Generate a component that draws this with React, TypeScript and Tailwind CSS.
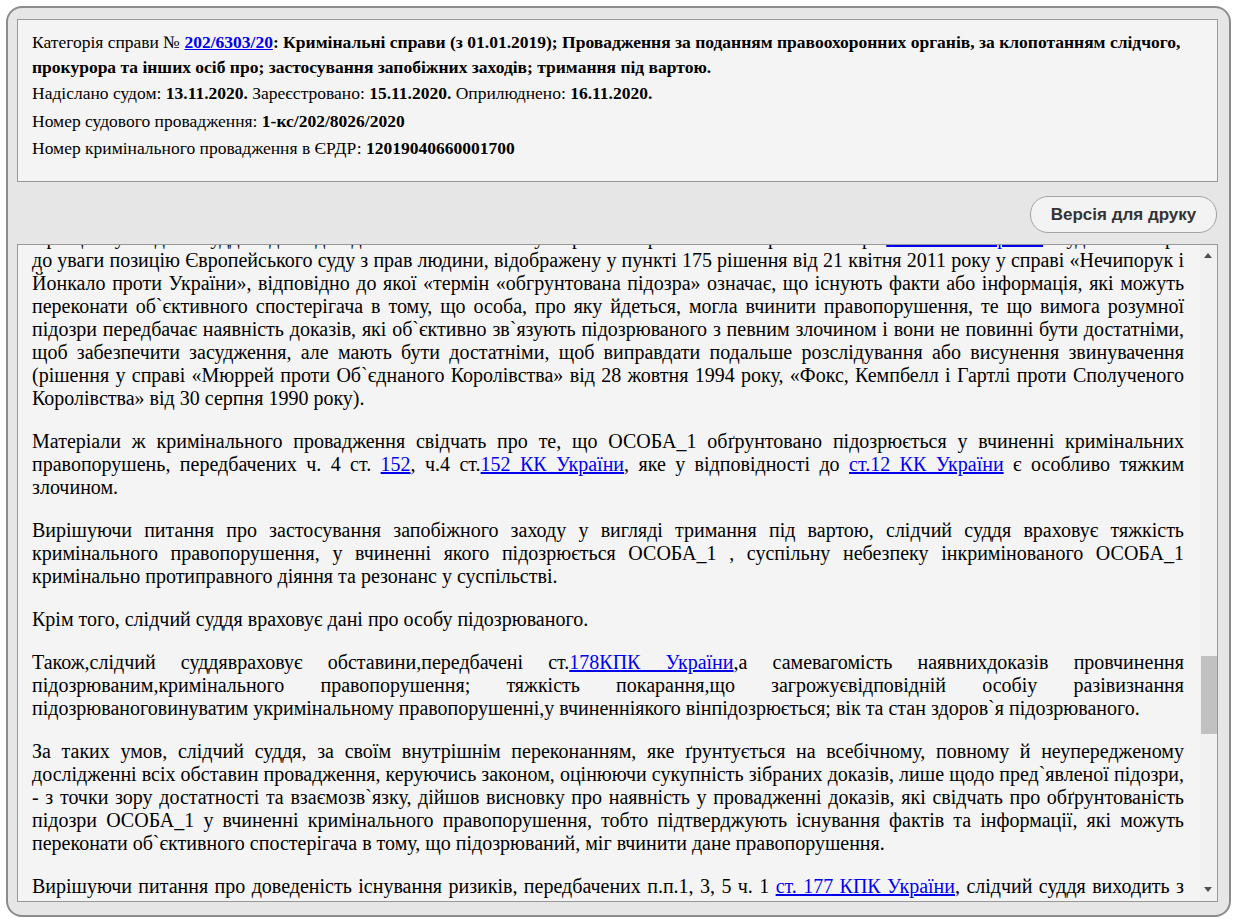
import React from "react";

const A = ({ children }: { children: React.ReactNode }) => (
  <a href="#" className="text-[#0000ee] underline">
    {children}
  </a>
);

export default function App() {
  return (
    <div className="w-[1235px] h-[923px] bg-white pt-[6px] pl-[6px]">
      <div className="w-[1225px] h-[911px] border-2 border-[#8c8c8c] rounded-[16px] bg-[#e6e6e6] pl-[9px] pr-[11px] pt-[11px] pb-[13px] flex flex-col">
        {/* Header */}
        <div className="h-[163px] shrink-0 border border-[#999] bg-[#f4f4f4] pl-[14px] pr-[12px] pt-[10px] font-['Liberation_Serif',serif] text-[17.5px] text-black">
          <div className="leading-[25px]">
            Категорія справи №{" "}
            <a href="#" className="font-bold text-[#0000ee] underline">
              202/6303/20
            </a>
            <b>
              : Кримінальні справи (з 01.01.2019); Провадження за поданням правоохоронних органів, за клопотанням слідчого,
              прокурора та інших осіб про; застосування запобіжних заходів; тримання під вартою.
            </b>
          </div>
          <div className="leading-[26px]">
            Надіслано судом: <b>13.11.2020.</b> Зареєстровано: <b>15.11.2020.</b> Оприлюднено: <b>16.11.2020.</b>
          </div>
          <div className="leading-[26px] mt-[2px]">
            Номер судового провадження: <b>1-кс/202/8026/2020</b>
          </div>
          <div className="leading-[26px] mt-[1px]">
            Номер кримінального провадження в ЄРДР: <b>12019040660001700</b>
          </div>
        </div>

        {/* Print button */}
        <div className="flex justify-end mt-[14px] mr-[1px] shrink-0">
          <button className="h-[37px] w-[187px] rounded-[18px] border border-[#a3a3a3] bg-[#f3f3f3] font-['Liberation_Sans',Arial,sans-serif] font-bold text-[17px] text-[#333]">
            Версія для друку
          </button>
        </div>

        {/* Body */}
        <div className="mt-[11px] flex-1 min-h-0 border border-[#999] bg-[#f4f4f4] flex overflow-hidden">
          <div className="flex-1 min-w-0 overflow-hidden pl-[14px] pr-[16px] font-['Liberation_Serif',serif] text-[20px] leading-[23px] text-black">
            <div className="-mt-[19px]">
              <div className="text-justify [text-align-last:justify] whitespace-nowrap overflow-hidden">
                При цьому слідчий суддя відповідно до вимог ст. 17 Закону України «Про виконання рішень» бере{" "}
                <A>ст. 9 КПК України</A>. Суд також бере
              </div>
              <p className="text-justify mb-[20px]">
                до уваги позицію Європейського суду з прав людини, відображену у пункті 175 рішення від 21 квітня 2011 року у справі «Нечипорук і
                Йонкало проти України», відповідно до якої «термін «обгрунтована підозра» означає, що існують факти або інформація, які можуть
                переконати об`єктивного спостерігача в тому, що особа, про яку йдеться, могла вчинити правопорушення, те що вимога розумної
                підозри передбачає наявність доказів, які об`єктивно зв`язують підозрюваного з певним злочином і вони не повинні бути достатніми,
                щоб забезпечити засудження, але мають бути достатніми, щоб виправдати подальше розслідування або висунення звинувачення
                (рішення у справі «Мюррей проти Об`єднаного Королівства» від 28 жовтня 1994 року, «Фокс, Кемпбелл і Гартлі проти Сполученого
                Королівства» від 30 серпня 1990 року).
              </p>
              <p className="text-justify mb-[20px]">
                Матеріали ж кримінального провадження свідчать про те, що ОСОБА_1 обґрунтовано підозрюється у вчиненні кримінальних
                правопорушень, передбачених ч. 4 ст. <A>152</A>, ч.4 ст.<A>152 КК України</A>, яке у відповідності до{" "}
                <A>ст.12 КК України</A> є особливо тяжким злочином.
              </p>
              <p className="text-justify mb-[20px]">
                Вирішуючи питання про застосування запобіжного заходу у вигляді тримання під вартою, слідчий суддя враховує тяжкість
                кримінального правопорушення, у вчиненні якого підозрюється ОСОБА_1 , суспільну небезпеку інкримінованого ОСОБА_1
                кримінально протиправного діяння та резонанс у суспільстві.
              </p>
              <p className="text-justify mb-[20px]">Крім того, слідчий суддя враховує дані про особу підозрюваного.</p>
              <p className="text-justify mb-[20px]">
                Також,слідчий суддявраховує обставини,передбачені ст.<A>178КПК України</A>,а самевагомість наявнихдоказів провчинення
                підозрюваним,кримінального правопорушення; тяжкість покарання,що загрожуєвідповідній особіу разівизнання
                підозрюваноговинуватим укримінальному правопорушенні,у вчиненніякого вінпідозрюється; вік та стан здоров`я підозрюваного.
              </p>
              <p className="text-justify mb-[20px]">
                За таких умов, слідчий суддя, за своїм внутрішнім переконанням, яке ґрунтується на всебічному, повному й неупередженому
                дослідженні всіх обставин провадження, керуючись законом, оцінюючи сукупність зібраних доказів, лише щодо пред`явленої підозри,
                - з точки зору достатності та взаємозв`язку, дійшов висновку про наявність у провадженні доказів, які свідчать про обґрунтованість
                підозри ОСОБА_1 у вчиненні кримінального правопорушення, тобто підтверджують існування фактів та інформації, які можуть
                переконати об`єктивного спостерігача в тому, що підозрюваний, міг вчинити дане правопорушення.
              </p>
              <p className="text-justify mb-[20px]">
                Вирішуючи питання про доведеність існування ризиків, передбачених п.п.1, 3, 5 ч. 1 <A>ст. 177 КПК України</A>, слідчий суддя виходить з
                того, що ризик переховування від органів досудового розслідування та суду підтверджується тяжкістю покарання.
              </p>
            </div>
          </div>
          {/* Scrollbar */}
          <div className="relative w-[17px] shrink-0 bg-[#f1f1f1]">
            <div className="absolute left-[4px] top-[8px] w-0 h-0 border-l-[4.5px] border-r-[4.5px] border-b-[5px] border-l-transparent border-r-transparent border-b-[#505050]" />
            <div className="absolute left-[1px] right-0 top-[411px] h-[78px] bg-[#c1c1c1]" />
            <div className="absolute left-[4px] bottom-[9px] w-0 h-0 border-l-[4.5px] border-r-[4.5px] border-t-[5px] border-l-transparent border-r-transparent border-t-[#505050]" />
          </div>
        </div>
      </div>
    </div>
  );
}
